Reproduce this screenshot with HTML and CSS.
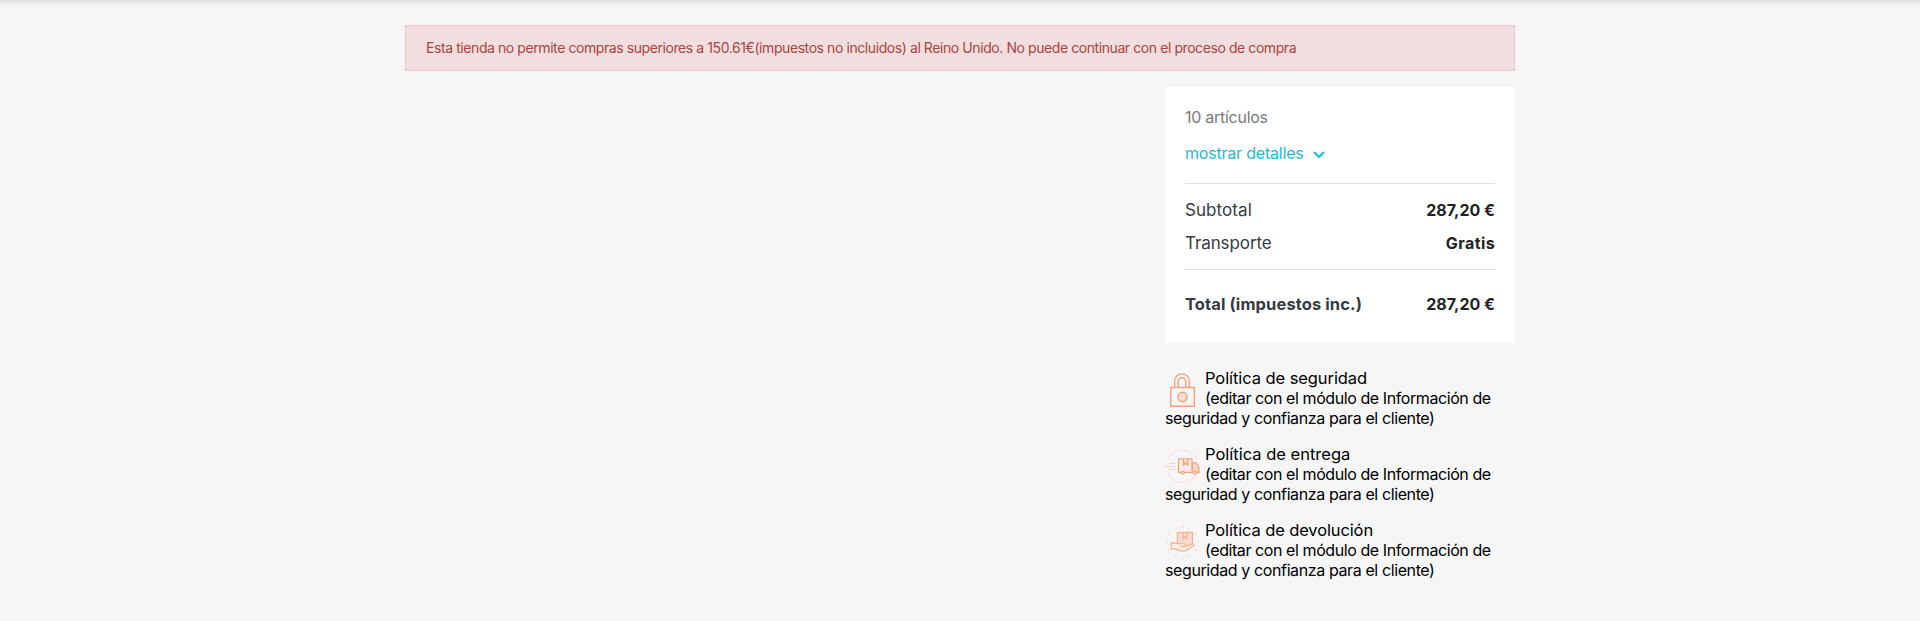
FILE: index.html
```
<!DOCTYPE html>
<html lang="es">
<head>
<meta charset="utf-8">
<title>Carrito</title>
<link rel="stylesheet" href="styles.css">
</head>
<body>
<div class="header-shadow"></div>
<main class="container">
  <div class="alert">Esta tienda no permite compras superiores a 150.61€(impuestos no incluidos) al Reino Unido. No puede continuar con el proceso de compra</div>
  <aside class="sidebar">
    <section class="card">
      <div class="count">10 artículos</div>
      <a class="toggle">mostrar detalles<svg class="chevron" width="12" height="8" viewBox="0 0 12 8"><path d="M1 1l5 5 5-5" fill="none" stroke="#24b9d7" stroke-width="2.2"/></svg></a>
      <div class="lines">
        <div class="row"><span class="label-subtotal">Subtotal</span><span class="value">287,20 €</span></div>
        <div class="row"><span class="label-shipping">Transporte</span><span class="value free">Gratis</span></div>
      </div>
      <div class="row total"><span class="label-total">Total (impuestos inc.)</span><span class="value">287,20 €</span></div>
    </section>
    <ul class="policies">
      <li class="policy">
        <svg class="icon" viewBox="0 0 35 35" fill="none" stroke="#f5a27c" stroke-width="1.4">
          <path d="M9.6 14V8.3a7.4 7.4 0 0 1 14.8 0V14M13.2 14V8.5a3.8 3.8 0 0 1 7.6 0V14"/>
          <path d="M5.7 14.5h23.6v18.8H5.7z"/>
          <circle cx="17.5" cy="24" r="4.7" fill="#f8d6c8"/>
          <path d="M15 24l2 2 3.5-4" stroke="#fff1ea" stroke-width="1"/>
        </svg>
        <span class="title-security">Política de seguridad</span><br>
        <span class="note-first">(editar con el módulo de Información de</span>
        <span class="note-last">seguridad y confianza para el cliente)</span>
      </li>
      <li class="policy">
        <svg class="icon" viewBox="0 0 35 35" fill="none" stroke="#f5a27c" stroke-width="1.3">
          <path d="M3 11a16 16 0 0 1 29-1M3 24a16 16 0 0 0 28 2" stroke="#f9d5c6" stroke-width="1.2" stroke-dasharray="1.3 1.2"/>
          <path d="M4 14.4h7M0 17.5h11M4 20.3h7" stroke="#f8cdbb" stroke-width="1"/>
          <path d="M27 13.8h4l3 4.7v5h-7z" fill="#f8d6c8"/>
          <path d="M13.5 9.8H27v13.6H13.5z" fill="#fbeee8"/>
          <path d="M18.3 10v6l2.3-1.8 2.3 1.8v-6" fill="#f8d6c8"/>
          <circle cx="18" cy="23.8" r="1.5" fill="#f5f5f5"/>
          <circle cx="30" cy="23.8" r="1.5" fill="#f5f5f5"/>
        </svg>
        <span class="title-delivery">Política de entrega</span><br>
        <span class="note-first">(editar con el módulo de Información de</span>
        <span class="note-last">seguridad y confianza para el cliente)</span>
      </li>
      <li class="policy">
        <svg class="icon" viewBox="0 0 35 35" fill="none" stroke="#f6ab88" stroke-width="1.1">
          <path d="M17.5 1v2M11 2.5l.7 1.8M24 2.5l-.7 1.8M3.5 8.5l1.6 1M31.5 8.5l-1.6 1M1 17h2M32 17h2M3 25.5l1.6-1M32 25.5l-1.6-1M10.5 32l.8-1.8M24.5 32l-.8-1.8M17.5 32v2" stroke="#f8cdbb"/>
          <path d="M12.3 7.3h15.2v14H12.3z" fill="#f8d9cd"/>
          <path d="M18 7.5v6l1.9-1.5 1.9 1.5v-6"/>
          <path d="M6.3 17.6l6.2 1.2h6.7c2 .5 1.8 2.5 0 2.7H15h6l6-2.6c2-.5 2.6 1 1.3 2l-7.2 4.5c-2 .9-4 .7-6 .2l-4.8-1.5-4-.3z" fill="#fbeee8"/>
        </svg>
        <span class="title-return">Política de devolución</span><br>
        <span class="note-first">(editar con el módulo de Información de</span>
        <span class="note-last">seguridad y confianza para el cliente)</span>
      </li>
    </ul>
  </aside>
</main>
</body>
</html>
```
FILE: styles.css
```
* { box-sizing: border-box; }

body {
  margin: 0;
  min-height: 621px;
  background: #f6f6f6;
  color: #000;
  font: 16px/20px Inter, "Liberation Sans", sans-serif;
}

.header-shadow {
  height: 7px;
  background: linear-gradient(#dcdcdc, #ececec 45%, #f6f6f6);
}

.container {
  width: 1110px;
  margin: 0 auto;
  padding-top: 18px;
}

.alert {
  height: 46px;
  padding: 12px 20px;
  border: 1px solid #ebc8c9;
  background: #f2dede;
  color: #a94442;
  font-size: 14px;
  letter-spacing: -0.42px;
  white-space: nowrap;
}

.sidebar {
  width: 350px;
  margin: 16px 0 0 auto;
}

.card {
  height: 256px;
  padding: 20px;
  background: #fff;
}

.count {
  color: #7a7a7a;
  letter-spacing: -0.27px;
}

.toggle {
  display: flex;
  align-items: center;
  gap: 9px;
  margin-top: 16px;
  color: #24b9d7;
  letter-spacing: -0.2px;
}

.chevron { margin-top: 4px; }

.lines {
  display: grid;
  gap: 13px;
  margin-top: 20px;
  padding: 16px 0;
  border: solid #dcdddd;
  border-width: 1px 0;
}

.row {
  display: flex;
  justify-content: space-between;
  height: 20px;
  color: #363a42;
}

.total {
  margin-top: 24px;
  font-weight: 700;
}

.value {
  color: #232323;
  font-weight: 700;
}

.free { letter-spacing: 0.4px; }
.label-subtotal { font-size: 17px; letter-spacing: 0.08px; }
.label-shipping { font-size: 17px; letter-spacing: -0.1px; }
.label-total { font-size: 16.5px; letter-spacing: 0.1px; }

.policies {
  margin: 25px 0 0;
  padding: 0;
  list-style: none;
}

.policy {
  height: 60px;
  margin-bottom: 16px;
  white-space: nowrap;
}

.icon {
  float: left;
  width: 35px;
  height: 35px;
  margin: 5px 5px 0 0;
}

.title-security,
.title-delivery,
.title-return { font-size: 16.5px; }

.title-security { letter-spacing: -0.08px; }
.title-delivery { letter-spacing: 0; }
.title-return { letter-spacing: -0.12px; }
.note-first { letter-spacing: -0.42px; }

.note-last {
  display: block;
  clear: left;
  letter-spacing: -0.39px;
}
```
